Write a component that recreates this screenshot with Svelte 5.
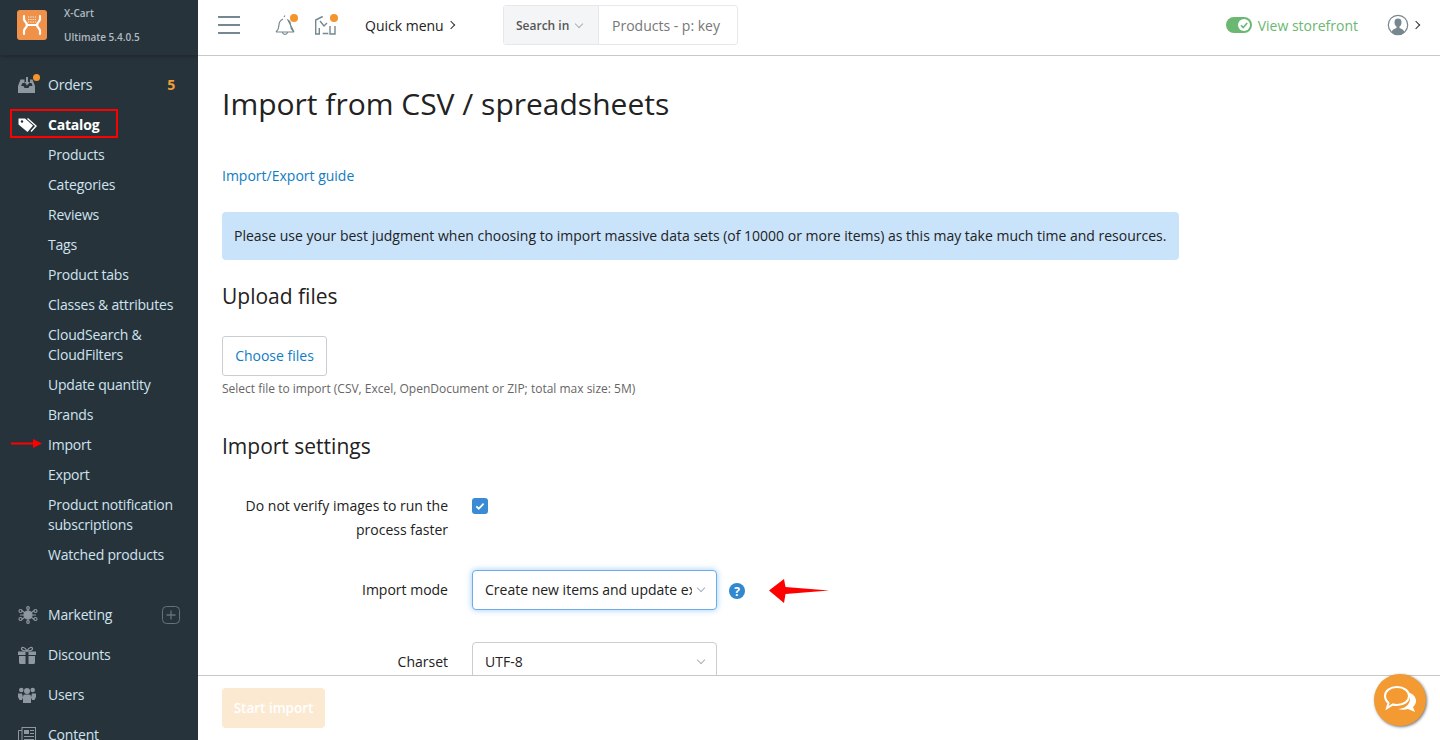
<script lang="ts">
	const catalogLinks = [
		'Products',
		'Categories',
		'Reviews',
		'Tags',
		'Product tabs',
		'Classes & attributes',
		'CloudSearch & CloudFilters',
		'Update quantity',
		'Brands',
		'Import',
		'Export',
		'Product notification subscriptions',
		'Watched products'
	];
</script>

<div class="root">
	<aside class="sidebar">
		<div class="brand">
			<svg class="logo" viewBox="0 0 30 30" width="30" height="30">
				<rect width="30" height="30" rx="3" fill="#f0914a" />
				<path d="M7 6v3c0 3 3 3 3 6s-3 3-3 6v3M23 6v3c0 3-3 3-3 6s3 3 3 6v3M9.500 15h11" fill="none" stroke="#fff" stroke-width="2.200" stroke-linecap="round" />
				<path d="M11 7h8M11 9.500h8M11 12h8" stroke="#fff" stroke-width="1.200" stroke-dasharray="1.300 1" opacity="0.85" />
			</svg>
			<div class="brand-text">
				<div>X-Cart</div>
				<div>Ultimate 5.4.0.5</div>
			</div>
		</div>

		<nav>
			<div class="item">
				<span class="icon">
					<svg viewBox="0 0 17 16" width="17" height="16">
						<path d="M0 9l2.500-6.500H6.500V6H4.500L3 9H5.500l1 2h4l1-2h3L13.500 6H12V2.500h2.500L17 9v7H0z" fill="#8d989f" />
						<path d="M8 0h2v5h2l-3 3.500L6.500 5H8z" fill="#8d989f" />
					</svg>
					<i class="dot"></i>
				</span>
				<span class="label">Orders</span>
				<b class="count">5</b>
			</div>

			<div class="item active">
				<span class="icon">
					<svg viewBox="0 0 20 16" width="20" height="16">
						<path d="M0.500 1.500h6.500l8 7-5.500 6.500-9-7.500z" fill="#fff" />
						<circle cx="4" cy="4.500" r="1.200" fill="#27333a" />
						<path d="M9.500 1.500l8.500 7.500-5 5.500" fill="none" stroke="#fff" stroke-width="1.400" />
					</svg>
				</span>
				<span class="label">Catalog</span>
			</div>
			<ul class="sub">
				{#each catalogLinks as link}
					<li>{link}</li>
				{/each}
			</ul>

			<div class="item">
				<span class="icon">
					<svg viewBox="0 0 20 18" width="20" height="18" fill="none" stroke="#8d989f" stroke-width="1.200">
						<path d="M10 9L3 4M10 9l7-5M10 9L3 14M10 9l7 5M10 9V2M10 9v7M10 9H2M10 9h8" />
						<circle cx="10" cy="9" r="4" fill="#8d989f" />
						<circle cx="10" cy="2" r="1.300" fill="#27333a" />
						<circle cx="10" cy="16" r="1.300" fill="#27333a" />
						<circle cx="2.500" cy="5" r="1.500" fill="#27333a" />
						<circle cx="17.500" cy="5" r="1.500" fill="#27333a" />
						<circle cx="2.500" cy="13" r="1.500" fill="#27333a" />
						<circle cx="17.500" cy="13" r="1.500" fill="#27333a" />
					</svg>
				</span>
				<span class="label">Marketing</span>
				<span class="plus">
					<svg viewBox="0 0 18 18" width="18" height="18" fill="none" stroke="#667279">
						<rect x="0.500" y="0.500" width="17" height="17" rx="4" />
						<path d="M9 4.500v9M4.500 9h9" stroke-width="1.300" />
					</svg>
				</span>
			</div>
			<div class="item">
				<span class="icon">
					<svg viewBox="0 0 18 18" width="18" height="18">
						<path d="M0 5.500h7.500v3.500H0zM10.500 5.500H18v3.500h-7.500zM1 10h6.500v8H2.500a1.500 1.500 0 0 1-1.500-1.500zM10.500 10H17v6.500a1.500 1.500 0 0 1-1.500 1.500h-5z" fill="#8d989f" />
						<path d="M9 5C7 1 3.500 0.500 3.500 2.500S6.500 5 9 5c2.500 0 5.500-.5 5.500-2.500S11 1 9 5z" fill="none" stroke="#8d989f" stroke-width="1.300" />
					</svg>
				</span>
				<span class="label">Discounts</span>
			</div>
			<div class="item">
				<span class="icon">
					<svg viewBox="0 0 18 16" width="18" height="16" fill="#8d989f">
						<circle cx="3.300" cy="3" r="2.300" />
						<circle cx="14.700" cy="3" r="2.300" />
						<circle cx="9" cy="4" r="3" />
						<path d="M0 6.500h4l1 4-1 2.500H1.500L0 10zM18 6.500h-4l-1 4 1 2.500h2.500L18 10z" />
						<path d="M5 9.500a2 2 0 0 1 2-2h4a2 2 0 0 1 2 2V16H5z" />
					</svg>
				</span>
				<span class="label">Users</span>
			</div>
			<div class="item">
				<span class="icon">
					<svg viewBox="0 0 18 16" width="18" height="16" fill="none" stroke="#8d989f">
						<rect x="4" y="0.500" width="13.500" height="15" />
						<path d="M4 3.500H0.500v12H4" />
						<rect x="6" y="3" width="5" height="4" fill="#8d989f" stroke="none" />
						<path d="M12 3.500h4M12 6.500h4M6 9.500h10M6 12.500h10" />
					</svg>
				</span>
				<span class="label">Content</span>
			</div>
		</nav>

		<div class="catalog-mark"></div>
		<svg class="import-arrow" viewBox="0 0 32 10" width="32" height="10">
			<path d="M0 3.500h22V0l9 4.500-9 4.500V5.500H0z" fill="#f00" />
		</svg>
	</aside>

	<div class="content">
		<header class="topbar">
			<svg class="burger" viewBox="0 0 22 18" width="22" height="18" fill="#76878f">
				<rect y="0" width="22" height="2" />
				<rect y="8" width="22" height="2" />
				<rect y="16" width="22" height="2" />
			</svg>
			<span class="tool bell">
				<svg viewBox="0 0 22 22" width="22" height="22" fill="none" stroke="#76878f" stroke-width="1.200">
					<path d="M2 18c2-2 3-3 3-7 0-3 2-5 4-6M14 6c2 1 2.500 3 2.500 5 0 4 1.500 5 3.500 7zM2 18h18M8.500 18.500c.5 2.500 4.500 2.500 5 0M10 3l1-1.500" />
				</svg>
				<i class="dot"></i>
			</span>
			<span class="tool plan">
				<svg viewBox="0 0 22 22" width="22" height="22" fill="none" stroke="#76878f" stroke-width="1.400">
					<path d="M5.300 14v6H1.700V6l7-3.500M6 7l4 5 3-3M8.700 19.500h5.600M16 12v8h5v-8" />
				</svg>
				<i class="dot"></i>
			</span>
			<span class="quick">Quick menu <i class="chev"></i></span>
			<div class="search">
				<span class="search-in">Search in <i class="down"></i></span>
				<span class="search-box">Products - p: key</span>
			</div>
			<span class="store">
				<span class="switch"><svg viewBox="0 0 12 12" width="12" height="12" fill="none" stroke="#6bb872" stroke-width="1.600"><path d="M3 6.300l2.200 2.200L9.200 4" /></svg></span>
				View storefront
			</span>
			<span class="user">
				<svg viewBox="0 0 22 22" width="22" height="22">
					<circle cx="11" cy="11" r="9.700" fill="#fff" stroke="#76878f" stroke-width="1.200" />
					<path d="M4.500 18.500c.5-3 3-3.500 5-4.500v-1.500C8 11.500 7.500 10 7.500 8c0-2.500 1.500-3.500 3.500-3.500s3.500 1 3.500 3.500c0 2-.5 3.500-2 4.500V14c2 1 4.500 1.500 5 4.500a9.500 9.500 0 0 1-13 0z" fill="#76878f" />
				</svg>
				<i class="chev"></i>
			</span>
		</header>

		<main>
			<h1>Import from CSV / spreadsheets</h1>
			<a class="guide" href="#guide">Import/Export guide</a>
			<div class="notice">Please use your best judgment when choosing to import massive data sets (of 10000 or more items) as this may take much time and resources.</div>

			<h2 class="upload">Upload files</h2>
			<button class="choose">Choose files</button>
			<p class="hint">Select file to import (CSV, Excel, OpenDocument or ZIP; total max size: 5M)</p>

			<h2 class="settings">Import settings</h2>
			<div class="row verify">
				<span class="row-label">Do not verify images to run the process faster</span>
				<span class="check">
					<svg viewBox="0 0 16 16" width="16" height="16" fill="none" stroke="#fff" stroke-width="1.700"><path d="M4.300 8.300l2.500 2.400 4.800-5" /></svg>
				</span>
			</div>
			<div class="row mode">
				<span class="row-label">Import mode</span>
				<div class="select focus">
					<span class="value">Create new items and update existing items</span>
					<i class="down"></i>
				</div>
				<span class="help">?</span>
				<svg class="mode-arrow" viewBox="0 0 60 26" width="60" height="26">
					<path d="M0 12.500L15 1l1.500 8L60 12.500 16.500 16 15 25z" fill="#f00" />
				</svg>
			</div>
			<div class="row charset">
				<span class="row-label">Charset</span>
				<div class="select">
					<span class="value">UTF-8</span>
					<i class="down"></i>
				</div>
			</div>
		</main>

		<footer>
			<button class="start">Start import</button>
		</footer>
	</div>

	<div class="chat">
		<svg viewBox="0 0 36 30" width="36" height="30">
			<path d="M25 7c5 1 9 4 9 9 0 3-2 5-3 6l2 5-7-3c-3 1-7 1-10 0 6 0 12-4 12-10 0-3-1-5-3-7z" fill="#fff" />
			<path d="M15 2c7 0 12 4 12 9s-5 9-12 9c-1 0-3 0-4-.5L5 23l1.500-5C4 16 3 14 3 11c0-5 5-9 12-9z" fill="#f39a33" stroke="#fff" stroke-width="2" />
		</svg>
	</div>
</div>

<style>
	:global(body) {
		margin: 0;
		font-family: 'Open Sans', 'Noto Sans', sans-serif;
		color: #222;
		background: #fff;
	}
	.root {
		position: relative;
		display: flex;
		height: 740px;
		overflow: hidden;
	}
	.sidebar {
		position: relative;
		flex: 0 0 198px;
		height: 740px;
		background: #27333a;
		overflow: hidden;
	}
	.brand {
		display: flex;
		align-items: flex-start;
		height: 55px;
		padding: 10px 0 0 17px;
		box-sizing: border-box;
		box-shadow: 0 2px 4px rgba(0, 0, 0, 0.22);
	}
	.brand-text {
		margin-left: 17px;
		margin-top: -9px;
		font-size: 10px;
		font-weight: 600;
		line-height: 24px;
		color: #b0bbc2;
	}
	nav {
		padding-top: 15px;
	}
	.item {
		display: flex;
		align-items: center;
		height: 30px;
		margin-bottom: 10px;
		padding-left: 18px;
		font-size: 14px;
		line-height: 20px;
		letter-spacing: -0.2px;
		color: #cfe3f0;
	}
	.item.active {
		margin-bottom: 0;
		color: #fff;
		font-weight: 700;
	}
	.icon {
		position: relative;
		display: flex;
		flex: 0 0 30px;
		align-items: center;
	}
	.icon .dot {
		top: -3px;
		left: 15px;
		width: 7px;
		height: 7px;
	}
	.label {
		flex: 1;
	}
	.count {
		margin-right: 23px;
		font-size: 14px;
		color: #f19d38;
	}
	.plus {
		display: flex;
		margin-right: 18px;
	}
	.sub {
		list-style: none;
		margin: 0 0 30px;
		padding: 0 20px 0 48px;
		font-size: 14px;
		line-height: 20px;
		letter-spacing: -0.2px;
		color: #cfe3f0;
	}
	.sub li {
		padding: 5px 0;
	}
	.catalog-mark {
		position: absolute;
		left: 10px;
		top: 109px;
		width: 108px;
		height: 29px;
		box-sizing: border-box;
		border: 2px solid #f00;
	}
	.import-arrow {
		position: absolute;
		left: 11px;
		top: 439px;
	}
	.dot {
		position: absolute;
		width: 8px;
		height: 8px;
		border-radius: 50%;
		background: #f3952c;
	}
	.content {
		display: flex;
		flex: 1;
		flex-direction: column;
		min-width: 0;
		height: 740px;
	}
	.topbar {
		display: flex;
		flex: 0 0 56px;
		align-items: center;
		box-sizing: border-box;
		padding: 0 0 5px 20px;
		border-bottom: 1px solid #c8c8c8;
		background: #fff;
		font-size: 14px;
	}
	.burger {
		margin-right: 34px;
	}
	.tool {
		position: relative;
		display: flex;
		margin-right: 18px;
	}
	.tool .dot {
		top: 0;
		right: -2px;
	}
	.plan {
		margin-right: 29px;
	}
	.quick {
		display: flex;
		align-items: center;
		width: 138px;
		color: #222;
		white-space: pre;
	}
	.quick .chev {
		margin-left: 1px;
	}
	.chev {
		display: inline-block;
		width: 5px;
		height: 5px;
		margin-left: 3px;
		border-top: 1.300px solid #333;
		border-right: 1.300px solid #333;
		transform: rotate(45deg);
	}
	.search {
		display: flex;
		box-sizing: border-box;
		width: 235px;
		height: 40px;
		border: 1px solid #e6e8ea;
		border-radius: 3px;
	}
	.search-in {
		display: flex;
		align-items: center;
		box-sizing: border-box;
		width: 95px;
		padding-left: 12px;
		background: #f4f5f6;
		border-right: 1px solid #e6e8ea;
		font-size: 12px;
		font-weight: 600;
		color: #555;
	}
	.search-in .down {
		margin-left: 7px;
	}
	.search-box {
		display: flex;
		align-items: center;
		padding-left: 13px;
		font-size: 14px;
		color: #777;
	}
	.down {
		display: inline-block;
		width: 5px;
		height: 5px;
		margin-top: -3px;
		border-right: 1px solid #aab0b8;
		border-bottom: 1px solid #aab0b8;
		transform: rotate(45deg);
	}
	.store {
		display: flex;
		align-items: center;
		margin-left: auto;
		color: #6bb872;
		font-size: 14px;
	}
	.switch {
		display: flex;
		justify-content: flex-end;
		align-items: center;
		box-sizing: border-box;
		width: 26px;
		height: 16px;
		margin-right: 6px;
		padding-right: 2px;
		border-radius: 8px;
		background: #6bb872;
	}
	.switch svg {
		border-radius: 50%;
		background: #fff;
	}
	.user {
		display: flex;
		align-items: center;
		margin: 0 21px 0 29px;
	}
	.user .chev {
		margin-left: 4px;
	}
	main {
		flex: 1;
		min-height: 0;
		overflow: hidden;
		padding: 0 24px;
	}
	h1 {
		margin: 27px 0 0;
		font-size: 30px;
		font-weight: 400;
		line-height: 42px;
		color: #222;
	}
	.guide {
		display: block;
		margin-top: 41px;
		font-size: 14px;
		line-height: 20px;
		color: #0f7dc2;
		text-decoration: none;
	}
	.notice {
		box-sizing: border-box;
		width: 957px;
		height: 48px;
		margin-top: 26px;
		padding: 14px 12px;
		border-radius: 4px;
		background: #c9e3fb;
		font-size: 14px;
		line-height: 20px;
		color: #222;
		white-space: nowrap;
	}
	h2 {
		margin: 0;
		font-size: 21px;
		font-weight: 400;
		line-height: 30px;
		color: #222;
	}
	.upload {
		margin-top: 21px;
	}
	.choose {
		display: block;
		box-sizing: border-box;
		width: 105px;
		height: 40px;
		margin-top: 25px;
		padding: 0 0 2px;
		border: 1px solid #c9ced2;
		border-radius: 3px;
		background: #fff;
		font-family: inherit;
		font-size: 14px;
		color: #0f7dc2;
	}
	.hint {
		margin: 5px 0 0;
		font-size: 12px;
		line-height: 16px;
		color: #666;
	}
	.settings {
		margin-top: 34px;
	}
	.row {
		display: flex;
		align-items: flex-start;
	}
	.row-label {
		box-sizing: border-box;
		flex: 0 0 226px;
		font-size: 14px;
		line-height: 24px;
		text-align: right;
		color: #222;
	}
	.verify {
		margin-top: 33px;
	}
	.check {
		display: flex;
		margin: 4px 0 0 24px;
		border-radius: 3px;
		background: #3a8bd6;
	}
	.mode {
		position: relative;
		margin-top: 28px;
		align-items: center;
		height: 40px;
	}
	.charset {
		margin-top: 32px;
		align-items: center;
		height: 40px;
	}
	.select {
		display: flex;
		align-items: center;
		box-sizing: border-box;
		width: 245px;
		height: 40px;
		margin-left: 24px;
		padding: 0 12px 2px 12px;
		border: 1px solid #c9ced2;
		border-radius: 4px;
		background: #fff;
		font-size: 14px;
		color: #222;
	}
	.select.focus {
		border-color: #6aaeea;
		box-shadow: 0 0 6px rgba(80, 160, 235, 0.55);
	}
	.value {
		flex: 1;
		overflow: hidden;
		white-space: nowrap;
		margin-right: 6px;
	}
	.help {
		display: flex;
		align-items: center;
		justify-content: center;
		width: 16px;
		height: 16px;
		margin: 2px 0 0 12px;
		border-radius: 50%;
		background: #2f88d0;
		color: #fff;
		font-size: 12px;
		font-weight: 700;
	}
	.mode-arrow {
		position: absolute;
		left: 547px;
		top: 8px;
	}
	footer {
		flex: 0 0 64px;
		box-sizing: border-box;
		padding: 12px 24px;
		border-top: 1px solid #c8c8c8;
		background: #fff;
	}
	.start {
		display: block;
		width: 103px;
		height: 40px;
		padding: 0;
		border: 0;
		border-radius: 4px;
		background: #fbe9d2;
		font-family: inherit;
		font-size: 13.500px;
		font-weight: 600;
		color: #fff;
	}
	.chat {
		position: absolute;
		left: 1374px;
		top: 674px;
		display: flex;
		align-items: center;
		justify-content: center;
		width: 52px;
		height: 52px;
		border-radius: 50%;
		background: #f39a33;
		box-shadow: 1px 1px 3px rgba(0, 0, 0, 0.55);
	}
</style>
